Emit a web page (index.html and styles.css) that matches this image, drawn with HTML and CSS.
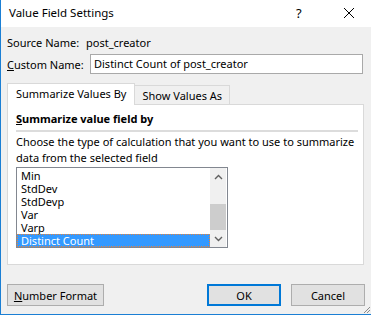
FILE: index.html
```html
<!DOCTYPE html>
<html lang="en">
<head>
    <meta charset="UTF-8">
    <title>Value Field Settings</title>
    <link rel="stylesheet" href="styles.css">
</head>
<body>
    <div class="window">
        <div class="titlebar">
            <span class="title">Value Field Settings</span>
            <span class="help">?</span>
            <span class="close">
                <svg width="12" height="12" viewBox="0 0 12 12"><path d="M1 1 L11 11 M11 1 L1 11" stroke="#000" stroke-width="1" fill="none"/></svg>
            </span>
        </div>

        <div class="body">
            <div class="row source-row">
                <span class="label">Source Name:</span>
                <span class="source-value">post_creator</span>
            </div>
            <div class="row custom-row">
                <span class="label"><u>C</u>ustom Name:</span>
                <div class="textbox">Distinct Count of post_creator</div>
            </div>

            <!-- Tabs -->
            <div class="tabs">
                <div class="tab active">Summarize Values By</div>
                <div class="tab">Show Values As</div>
            </div>
            <div class="panel">
                <div class="group-title"><u>S</u>ummarize value field by</div>
                <p class="hint">Choose the type of calculation that you want to use to summarize data from the selected field</p>
                <div class="listbox">
                    <ul class="items">
                        <li>Min</li>
                        <li>StdDev</li>
                        <li>StdDevp</li>
                        <li>Var</li>
                        <li>Varp</li>
                        <li class="selected">Distinct Count</li>
                    </ul>
                    <div class="scrollbar">
                        <div class="arrow">
                            <svg width="9" height="6" viewBox="0 0 9 6"><path d="M1 5 L4.5 1.5 L8 5" stroke="#606060" stroke-width="1.4" fill="none"/></svg>
                        </div>
                        <div class="track"><div class="thumb"></div></div>
                        <div class="arrow">
                            <svg width="9" height="6" viewBox="0 0 9 6"><path d="M1 1 L4.5 4.5 L8 1" stroke="#606060" stroke-width="1.4" fill="none"/></svg>
                        </div>
                    </div>
                </div>
            </div>

            <div class="buttons">
                <button class="btn number-btn"><u>N</u>umber Format</button>
                <div class="spacer"></div>
                <button class="btn ok-btn">OK</button>
                <button class="btn cancel-btn">Cancel</button>
            </div>
        </div>
        <div class="grip">
            <svg width="10" height="10" viewBox="0 0 10 10"><path d="M9 3 L3 9 M9 6 L6 9" stroke="#8a8a8a" stroke-width="1" fill="none"/></svg>
        </div>
    </div>
</body>
</html>
```

FILE: styles.css
```css
body, html {
    margin: 0;
    padding: 0;
    width: 371px;
    height: 316px;
    overflow: hidden;
    background: #fff;
    font-family: 'Noto Sans', 'Open Sans', sans-serif;
    font-size: 11px;
    color: #000;
}
.window {
    position: relative;
    width: 370px;
    height: 314px;
    border-left: 1px solid #1b7fd4;
    border-bottom: 1px solid #1b7fd4;
    background: #f0f0f0;
    display: flex;
    flex-direction: column;
    overflow: hidden;
    white-space: nowrap;
}
.titlebar {
    height: 27px;
    background: #fff;
    display: flex;
    align-items: center;
    flex-shrink: 0;
    font-size: 11.5px;
}
.title {
    margin-left: 8px;
    margin-top: -2px;
    flex: 1;
}
.help {
    width: 14px;
    margin-right: 33px;
    margin-top: -2px;
    font-size: 13px;
}
.close {
    width: 12px;
    height: 12px;
    margin-right: 16px;
    margin-top: -2px;
}
.close svg {
    display: block;
}
.body {
    flex: 1;
    padding: 0 6px 0 6px;
    display: flex;
    flex-direction: column;
}
.row {
    display: flex;
    align-items: center;
}
.source-row {
    height: 16px;
    margin-top: 7px;
}
.label {
    width: 79px;
    flex-shrink: 0;
}
.custom-row {
    margin-top: 4px;
}
.textbox {
    width: 268px;
    height: 18px;
    border: 1px solid #a9a9a9;
    background: #fff;
    padding-left: 3px;
    line-height: 18px;
    margin-left: 4px;
}
.tabs {
    display: flex;
    align-items: flex-end;
    margin-top: 9px;
    height: 21px;
}
.tab {
    height: 18px;
    line-height: 19px;
    padding: 0 7px;
    border: 1px solid #d9d9d9;
    border-bottom: none;
    background: #f0f0f0;
}
.tab.active {
    height: 21px;
    line-height: 20px;
    background: #fff;
    padding: 0 8px 0 8px;
    position: relative;
    z-index: 1;
    margin-bottom: -1px;
}
.tab + .tab {
    border-left: none;
}
.panel {
    width: 342px;
    height: 159px;
    background: #fff;
    border: 1px solid #d9d9d9;
    padding: 0 5px 0 8px;
}
.group-title {
    font-weight: bold;
    margin-top: 7px;
    padding-bottom: 4px;
    border-bottom: 2px solid #dcdcdc;
    line-height: 14px;
}
.hint {
    margin: 2px 0 0 0;
    line-height: 16px;
    white-space: normal;
}
.listbox {
    width: 210px;
    height: 79px;
    border: 1px solid #828790;
    margin-top: 1px;
    display: flex;
    background: #fff;
}
.items {
    list-style: none;
    margin: 0;
    padding: 1px 0 0 0;
    flex: 1;
}
.items li {
    height: 13px;
    line-height: 13px;
    padding-left: 4px;
}
.items li.selected {
    background: #3399ff;
    color: #fff;
    outline: 1px dotted #e8833a;
    outline-offset: -1px;
}
.scrollbar {
    width: 16px;
    margin-right: 1px;
    background: #f0f0f0;
    display: flex;
    flex-direction: column;
}
.arrow {
    height: 17px;
    display: flex;
    align-items: center;
    justify-content: center;
}
.track {
    flex: 1;
    display: flex;
    flex-direction: column;
    justify-content: flex-end;
}
.thumb {
    height: 26px;
    background: #cdcdcd;
}
.buttons {
    display: flex;
    margin-top: 19px;
}
.spacer {
    flex: 1;
}
.btn {
    font-family: inherit;
    font-size: 11px;
    color: #000;
    height: 22px;
    background: #e1e1e1;
    border: 1px solid #adadad;
    padding: 0;
    margin: 0;
}
.number-btn {
    width: 97px;
}
.ok-btn {
    width: 74px;
    border: 2px solid #0078d7;
}
.cancel-btn {
    width: 74px;
    margin-left: 10px;
}
.grip {
    position: absolute;
    right: 0;
    bottom: 0;
    width: 10px;
    height: 10px;
}
.grip svg {
    display: block;
}
```
